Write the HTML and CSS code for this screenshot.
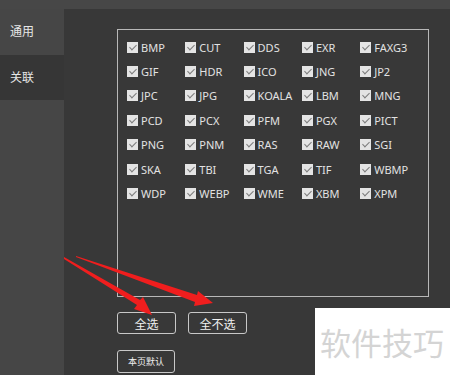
FILE: index.html
```html
<!DOCTYPE html>
<html lang="zh-CN">
<head>
  <meta charset="UTF-8" />
  <title>关联</title>
  <link rel="stylesheet" href="styles.css">
</head>
<body>

<div class="topbar"></div>

<div class="window">
  <nav class="sidebar">
    <div class="tab">通用</div>
    <div class="tab active">关联</div>
  </nav>

  <main class="content">
    <div class="format-box">
      <label class="fmt"><span class="cb"></span>BMP</label>
      <label class="fmt"><span class="cb"></span>CUT</label>
      <label class="fmt"><span class="cb"></span>DDS</label>
      <label class="fmt"><span class="cb"></span>EXR</label>
      <label class="fmt"><span class="cb"></span>FAXG3</label>
      <label class="fmt"><span class="cb"></span>GIF</label>
      <label class="fmt"><span class="cb"></span>HDR</label>
      <label class="fmt"><span class="cb"></span>ICO</label>
      <label class="fmt"><span class="cb"></span>JNG</label>
      <label class="fmt"><span class="cb"></span>JP2</label>
      <label class="fmt"><span class="cb"></span>JPC</label>
      <label class="fmt"><span class="cb"></span>JPG</label>
      <label class="fmt"><span class="cb"></span>KOALA</label>
      <label class="fmt"><span class="cb"></span>LBM</label>
      <label class="fmt"><span class="cb"></span>MNG</label>
      <label class="fmt"><span class="cb"></span>PCD</label>
      <label class="fmt"><span class="cb"></span>PCX</label>
      <label class="fmt"><span class="cb"></span>PFM</label>
      <label class="fmt"><span class="cb"></span>PGX</label>
      <label class="fmt"><span class="cb"></span>PICT</label>
      <label class="fmt"><span class="cb"></span>PNG</label>
      <label class="fmt"><span class="cb"></span>PNM</label>
      <label class="fmt"><span class="cb"></span>RAS</label>
      <label class="fmt"><span class="cb"></span>RAW</label>
      <label class="fmt"><span class="cb"></span>SGI</label>
      <label class="fmt"><span class="cb"></span>SKA</label>
      <label class="fmt"><span class="cb"></span>TBI</label>
      <label class="fmt"><span class="cb"></span>TGA</label>
      <label class="fmt"><span class="cb"></span>TIF</label>
      <label class="fmt"><span class="cb"></span>WBMP</label>
      <label class="fmt"><span class="cb"></span>WDP</label>
      <label class="fmt"><span class="cb"></span>WEBP</label>
      <label class="fmt"><span class="cb"></span>WME</label>
      <label class="fmt"><span class="cb"></span>XBM</label>
      <label class="fmt"><span class="cb"></span>XPM</label>
    </div>

    <div class="btn-row">
      <button class="btn">全选</button>
      <button class="btn">全不选</button>
    </div>
    <button class="btn btn-small">本页默认</button>
  </main>
</div>

<svg class="arrows" width="450" height="375" viewBox="0 0 450 375">
  <polygon points="64,257 140,300 143,297 152,315 134,309 137,305 64,259" fill="#f01e1e"/>
  <polygon points="76,256 197,295 198,291 213,303 194,306 195,302 76,257" fill="#f01e1e"/>
</svg>

<div class="watermark">软件技巧</div>

</body>
</html>
```

FILE: styles.css
```css
body {
  margin: 0;
  width: 450px;
  height: 375px;
  overflow: hidden;
  background-color: #383838;
  color: #e2e2e2;
  font-family: 'Noto Sans', 'Noto Sans CJK SC', sans-serif;
  display: flex;
  flex-direction: column;
  position: relative;
}
.topbar {
  height: 9px;
  background-color: #474747;
  flex-shrink: 0;
}
.window {
  flex: 1;
  display: flex;
}
.sidebar {
  width: 64px;
  background-color: #464646;
  display: flex;
  flex-direction: column;
}
.tab {
  height: 46px;
  line-height: 46px;
  padding-left: 10px;
  font-size: 12px;
  color: #e6e6e6;
}
.tab.active {
  background-color: #363636;
  height: 45px;
  line-height: 45px;
}
.content {
  flex: 1;
  padding: 20px 0 0 53px;
  display: flex;
  flex-direction: column;
  align-items: flex-start;
}
.format-box {
  width: 310px;
  height: 266px;
  border: 1px solid #b8b8b8;
  box-sizing: content-box;
  padding: 5px 0 0 9px;
  box-sizing: border-box;
  width: 312px;
  height: 268px;
  display: grid;
  grid-template-columns: repeat(5, 58.3px);
  grid-auto-rows: 24.4px;
  align-content: start;
}
.fmt {
  display: flex;
  align-items: center;
  gap: 3px;
  font-size: 11px;
  color: #e2e2e2;
}
.cb {
  width: 11px;
  height: 11px;
  background-color: #e4e4e4;
  position: relative;
  flex-shrink: 0;
}
.cb::after {
  content: '';
  position: absolute;
  left: 4px;
  top: 1px;
  width: 3px;
  height: 6px;
  border: solid #7c7c7c;
  border-width: 0 1.5px 1.5px 0;
  transform: rotate(45deg);
}
.btn-row {
  display: flex;
  gap: 12px;
  margin-top: 15px;
}
.btn {
  width: 59px;
  height: 22px;
  background-color: transparent;
  border: 1px solid #c8c8c8;
  border-radius: 3px;
  color: #f0f0f0;
  font-family: 'Noto Sans CJK SC', sans-serif;
  font-size: 12px;
  padding: 0;
}
.btn-small {
  margin-top: 16px;
  width: 58px;
  height: 23px;
  font-size: 9px;
}
.arrows {
  position: absolute;
  left: 0;
  top: 0;
  pointer-events: none;
}
.watermark {
  position: absolute;
  left: 315px;
  top: 308px;
  width: 135px;
  height: 67px;
  background-color: #fff;
  color: #d4d4d4;
  font-family: 'Noto Sans CJK SC', sans-serif;
  font-size: 31px;
  line-height: 67px;
  padding-left: 5px;
  box-sizing: border-box;
}
```
